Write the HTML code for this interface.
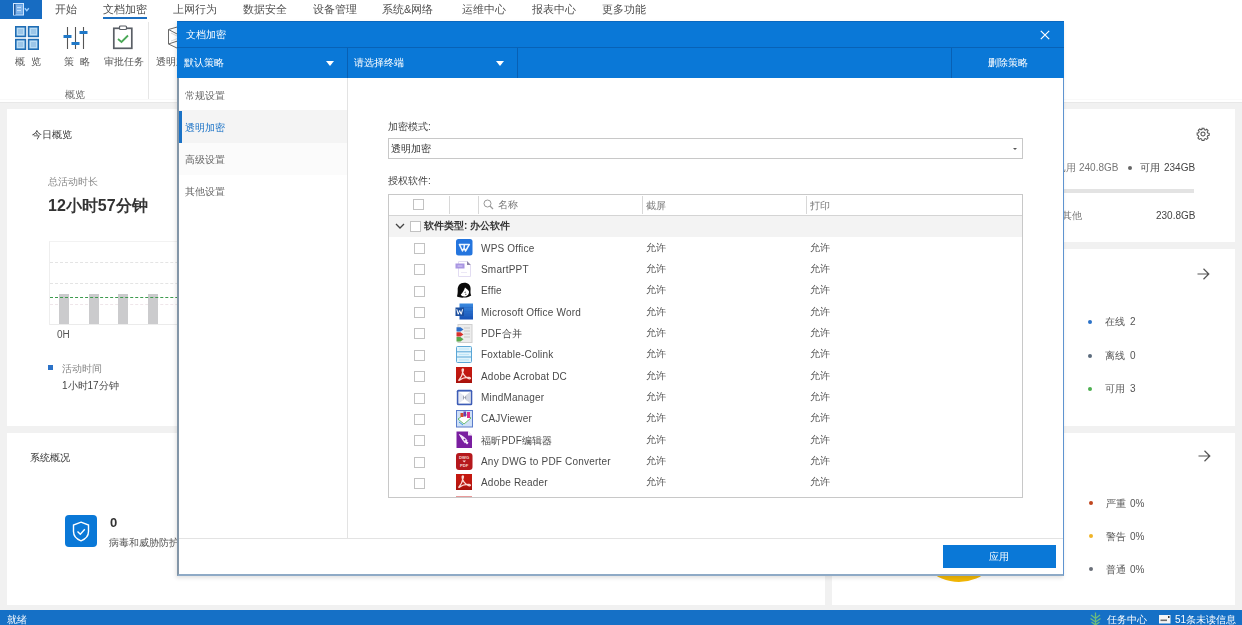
<!DOCTYPE html>
<html><head><meta charset="utf-8">
<style>
*{margin:0;padding:0;box-sizing:border-box}
html,body{width:1242px;height:625px;overflow:hidden;background:#fff;font-family:"Liberation Sans",sans-serif;color:#333}
.a{position:absolute}
.t{position:absolute;white-space:nowrap;line-height:1;will-change:transform}

.cb{position:absolute;width:11px;height:11px;border:1px solid #c2c2c2;background:#fff}
.rt{font-size:10px;letter-spacing:0.2px;color:#4a4a4a;margin-top:1px}
.rt2{font-size:10px;color:#555}
.ico{position:absolute;width:16px;height:16px}
.i0{background:#2f7de1;border-radius:3px}
.i1{background:#ece6f8}
.i2{background:#222;border-radius:50%}
.i3{background:#2b5cb8}
.i4{background:#d84a3a}
.i5{background:#e8f4fb;border:1px solid #5aa8d8}
.i6{background:#c4201a}
.i7{background:#3a5aa8}
.i8{background:#7aa6e0}
.i9{background:#7a1a9a}
.i10{background:#b41e1e;border-radius:3px}
.i11{background:#c4201a}
</style></head><body>
<!-- menu bar -->
<div class="a" style="left:0;top:0;width:42px;height:19px;background:#176cc2"></div>
<div class="t" style="left:55px;top:4px;font-size:11px;color:#505050">开始</div>
<div class="t" style="left:103px;top:4px;font-size:11px;color:#505050">文档加密</div>
<div class="a" style="left:103px;top:17px;width:44px;height:2px;background:#1c6fc1"></div>
<div class="t" style="left:173px;top:4px;font-size:11px;color:#505050">上网行为</div>
<div class="t" style="left:243px;top:4px;font-size:11px;color:#505050">数据安全</div>
<div class="t" style="left:313px;top:4px;font-size:11px;color:#505050">设备管理</div>
<div class="t" style="left:382px;top:4px;font-size:11px;color:#505050">系统&amp;网络</div>
<div class="t" style="left:462px;top:4px;font-size:11px;color:#505050">运维中心</div>
<div class="t" style="left:532px;top:4px;font-size:11px;color:#505050">报表中心</div>
<div class="t" style="left:602px;top:4px;font-size:11px;color:#505050">更多功能</div>

<!-- ribbon -->
<div class="t" style="left:15px;top:57px;font-size:10px;color:#555">概&nbsp;&nbsp;览</div>
<div class="t" style="left:64px;top:57px;font-size:10px;color:#555">策&nbsp;&nbsp;略</div>
<div class="t" style="left:104px;top:57px;font-size:10px;color:#555">审批任务</div>
<div class="t" style="left:156px;top:57px;font-size:10px;color:#555">透明加密</div>
<div class="t" style="left:65px;top:90px;font-size:10px;color:#666">概览</div>
<div class="a" style="left:148px;top:22px;width:1px;height:78px;background:#e6e6e6"></div>

<!-- gray bg -->
<div class="a" style="left:0;top:102px;width:1242px;height:508px;background:#f1f1f1"></div>
<div class="a" style="left:7px;top:109px;width:818px;height:317px;background:#fff"></div>
<div class="a" style="left:832px;top:109px;width:403px;height:133px;background:#fff"></div>
<div class="a" style="left:832px;top:249px;width:403px;height:177px;background:#fff"></div>
<div class="a" style="left:7px;top:433px;width:818px;height:172px;background:#fff"></div>
<div class="a" style="left:832px;top:433px;width:403px;height:172px;background:#fff"></div>

<!-- card content -->
<div class="t" style="left:32px;top:130px;font-size:10px;color:#333">今日概览</div>
<div class="t" style="left:48px;top:177px;font-size:10px;color:#888">总活动时长</div>
<div class="t" style="left:48px;top:198px;font-size:16px;font-weight:bold;color:#333">12小时57分钟</div>

<div class="t" style="left:30px;top:453px;font-size:10px;color:#333">系统概况</div>

<!-- status bar -->
<div class="a" style="left:0;top:610px;width:1242px;height:15px;background:#1570c6"></div>
<div class="t" style="left:7px;top:615px;font-size:10px;color:#fff">就绪</div>
<div class="t" style="left:1107px;top:615px;font-size:10px;color:#fff">任务中心</div>
<div class="t" style="left:1175px;top:615px;font-size:10px;color:#fff">51条未读信息</div>


<!-- app button icon -->
<svg class="a" style="left:13px;top:3px" width="17" height="13" viewBox="0 0 17 13"><rect x="0.5" y="0.5" width="10" height="11.5" fill="#5b9be0" stroke="#cfe6ff" stroke-width="1"/><rect x="3" y="2" width="6.5" height="8.5" fill="#7fb3ea"/><path d="M1.8 1V12" stroke="#123f78" stroke-width="1"/><path d="M4 4.5H8M4 7.5H8" stroke="#cfe6ff" stroke-width="0.8"/><path d="M11.8 5.3L13.8 7.6L15.8 5.3" fill="none" stroke="#9fd0ff" stroke-width="1.4"/></svg>
<!-- ribbon icons -->
<svg class="a" style="left:15px;top:26px" width="24" height="24" viewBox="0 0 24 24">
<g fill="#b9dcf5" stroke="#1f6db4" stroke-width="1.6">
<rect x="0.8" y="0.8" width="9.6" height="9.6"/><rect x="13.6" y="0.8" width="9.6" height="9.6"/>
<rect x="0.8" y="13.6" width="9.6" height="9.6"/><rect x="13.6" y="13.6" width="9.6" height="9.6"/></g>
<g fill="#9cc6e8"><rect x="3" y="3" width="5" height="5"/><rect x="16" y="3" width="5" height="5"/><rect x="3" y="16" width="5" height="5"/><rect x="16" y="16" width="5" height="5"/></g>
</svg>
<svg class="a" style="left:63px;top:26px" width="26" height="24" viewBox="0 0 26 24">
<g stroke="#555" stroke-width="1.1"><path d="M4.5 1V23M12.5 1V23M20.5 1V23"/></g>
<g fill="#1f78c8"><rect x="0.5" y="9" width="8" height="3"/><rect x="8.5" y="16" width="8" height="3"/><rect x="16.5" y="5" width="8" height="3"/></g>
</svg>
<svg class="a" style="left:112px;top:25px" width="22" height="25" viewBox="0 0 22 25">
<rect x="1.8" y="3.3" width="18" height="20" fill="none" stroke="#5a5f66" stroke-width="1.7"/>
<rect x="7.5" y="1" width="7" height="3.5" rx="1" fill="#fff" stroke="#5a5f66" stroke-width="1.2"/>
<path d="M6 14L9.5 17L16 10.5" fill="none" stroke="#4aa857" stroke-width="1.8"/>
</svg>
<svg class="a" style="left:167px;top:25px" width="12" height="26" viewBox="0 0 12 26">
<path d="M12 1.5L1.5 4.5V19L12 24M1.5 4.5L12 10M1.5 19L12 15.5" fill="none" stroke="#6a6a6a" stroke-width="1"/>
<path d="M4 8L12 12M4 16L12 13" fill="none" stroke="#cfcfcf" stroke-width="0.8"/>
</svg>
<div class="a" style="left:0;top:102px;width:1242px;height:1px;background:#e8e8e8"></div><div class="a" style="left:0;top:99px;width:1242px;height:1px;background:#f9f9f9"></div>

<!-- chart -->
<div class="a" style="left:49px;top:241px;width:776px;height:84px;border-left:1px solid #eee;border-top:1px solid #f2f2f2"></div>
<div class="a" style="left:50px;top:262px;width:775px;height:0;border-top:1px dashed #e4e4e4"></div>
<div class="a" style="left:50px;top:283px;width:775px;height:0;border-top:1px dashed #e4e4e4"></div>
<div class="a" style="left:50px;top:324px;width:775px;height:1px;background:#ebebeb"></div>
<div class="a" style="left:50px;top:304px;width:775px;height:0;border-top:1px dashed #efe6ea"></div>
<div class="a" style="left:59px;top:294px;width:10px;height:30px;background:#cbcbcd"></div>
<div class="a" style="left:89px;top:294px;width:10px;height:30px;background:#cbcbcd"></div>
<div class="a" style="left:118px;top:294px;width:10px;height:30px;background:#cbcbcd"></div>
<div class="a" style="left:148px;top:294px;width:10px;height:30px;background:#cbcbcd"></div>
<div class="a" style="left:50px;top:297px;width:775px;height:0;border-top:1px dashed #3d9a4e"></div>
<div class="t" style="left:57px;top:330px;font-size:10px;color:#555">0H</div>
<div class="a" style="left:48px;top:365px;width:5px;height:5px;background:#2b72c8"></div>
<div class="t" style="left:62px;top:364px;font-size:10px;color:#888">活动时间</div>
<div class="t" style="left:62px;top:381px;font-size:10px;color:#444">1小时17分钟</div>

<!-- shield -->
<div class="a" style="left:65px;top:515px;width:32px;height:32px;background:#0a78d7;border-radius:4px"></div>
<svg class="a" style="left:72px;top:521px" width="18" height="21" viewBox="0 0 18 21">
<path d="M9 1.2L16.5 4V10.5C16.5 15 13 18.3 9 19.8C5 18.3 1.5 15 1.5 10.5V4Z" fill="none" stroke="#fff" stroke-width="1.4"/>
<path d="M5.5 10.5L8.3 13.2L12.8 8.2" fill="none" stroke="#fff" stroke-width="1.4"/>
</svg>
<div class="t" style="left:110px;top:516px;font-size:13px;font-weight:bold;color:#333">0</div>
<div class="t" style="left:109px;top:538px;font-size:10px;color:#555">病毒和威胁防护</div>

<!-- right cards -->
<svg class="a" style="left:1196px;top:127px" width="14" height="14" viewBox="0 0 24 24"><path fill="none" stroke="#555" stroke-width="1.8" d="M12 8.5a3.5 3.5 0 1 0 0 7 3.5 3.5 0 1 0 0-7zM10.3 2h3.4l.5 2.6 1.9.8 2.2-1.5 2.4 2.4-1.5 2.2.8 1.9 2.6.5v3.4l-2.6.5-.8 1.9 1.5 2.2-2.4 2.4-2.2-1.5-1.9.8-.5 2.6h-3.4l-.5-2.6-1.9-.8-2.2 1.5-2.4-2.4 1.5-2.2-.8-1.9L2 13.7v-3.4l2.6-.5.8-1.9-1.5-2.2 2.4-2.4 2.2 1.5 1.9-.8z"/></svg>
<div class="t" style="left:1056px;top:163px;font-size:10px;color:#777">已用</div><div class="t" style="left:1079px;top:163px;font-size:10px;color:#777">240.8GB</div>
<div class="a" style="left:1128px;top:166px;width:4px;height:4px;border-radius:50%;background:#666"></div>
<div class="t" style="left:1140px;top:163px;font-size:10px;color:#444">可用</div><div class="t" style="left:1164px;top:163px;font-size:10px;color:#444">234GB</div>
<div class="a" style="left:1000px;top:189px;width:194px;height:4px;background:#e3e3e3"></div>
<div class="t" style="left:1062px;top:211px;font-size:10px;color:#777">其他</div>
<div class="t" style="left:1156px;top:211px;font-size:10px;color:#444">230.8GB</div>

<svg class="a" style="left:1197px;top:268px" width="13" height="12" viewBox="0 0 13 12"><path d="M0.5 6H12M6.5 0.8L11.8 6L6.5 11.2" fill="none" stroke="#555" stroke-width="1.2"/></svg>
<div class="a" style="left:1088px;top:320px;width:4px;height:4px;border-radius:50%;background:#2b72c8"></div>
<div class="a" style="left:1088px;top:354px;width:4px;height:4px;border-radius:50%;background:#5b6b7c"></div>
<div class="a" style="left:1088px;top:387px;width:4px;height:4px;border-radius:50%;background:#4caf50"></div>
<div class="t" style="left:1105px;top:317px;font-size:10px;color:#555">在线</div><div class="t" style="left:1130px;top:317px;font-size:10px;color:#555">2</div>
<div class="t" style="left:1105px;top:351px;font-size:10px;color:#555">离线</div><div class="t" style="left:1130px;top:351px;font-size:10px;color:#555">0</div>
<div class="t" style="left:1105px;top:384px;font-size:10px;color:#555">可用</div><div class="t" style="left:1130px;top:384px;font-size:10px;color:#555">3</div>

<svg class="a" style="left:1198px;top:450px" width="13" height="12" viewBox="0 0 13 12"><path d="M0.5 6H12M6.5 0.8L11.8 6L6.5 11.2" fill="none" stroke="#555" stroke-width="1.2"/></svg>
<div class="a" style="left:1089px;top:501px;width:4px;height:4px;border-radius:50%;background:#c0461e"></div>
<div class="a" style="left:1089px;top:534px;width:4px;height:4px;border-radius:50%;background:#f0b428"></div>
<div class="a" style="left:1089px;top:567px;width:4px;height:4px;border-radius:50%;background:#6b7079"></div>
<div class="t" style="left:1106px;top:499px;font-size:10px;color:#555">严重</div><div class="t" style="left:1130px;top:499px;font-size:10px;color:#555">0%</div>
<div class="t" style="left:1106px;top:532px;font-size:10px;color:#555">警告</div><div class="t" style="left:1130px;top:532px;font-size:10px;color:#555">0%</div>
<div class="t" style="left:1106px;top:565px;font-size:10px;color:#555">普通</div><div class="t" style="left:1130px;top:565px;font-size:10px;color:#555">0%</div>

<div class="a" style="left:914px;top:492px;width:90px;height:90px;border-radius:50%;background:#f2b705"></div>

<!-- status icons -->
<svg class="a" style="left:1089px;top:612px" width="13" height="13" viewBox="0 0 13 13"><path d="M6.5 0.5V13M2 3L6.5 6.5L11 3M1.5 6.5L6.5 10L11.5 6.5M2.5 10L6.5 13L10.5 10" fill="none" stroke="#6dbb7c" stroke-width="1.3"/></svg>
<svg class="a" style="left:1159px;top:615px" width="12" height="9" viewBox="0 0 12 9"><rect x="0" y="0" width="11.5" height="8.5" fill="#f4f4f4"/><rect x="1.5" y="4.5" width="6.5" height="1.6" fill="#6b6b6b"/><rect x="9" y="1" width="1.5" height="2" fill="#333"/></svg>

<!-- dialog -->
<div class="a" style="left:177px;top:21px;width:887px;height:555px;background:#fff;box-shadow:-1px 2px 4px rgba(0,0,0,0.12);border-left:2px solid #8396a8;border-right:1px solid #5f94d0;border-bottom:2px solid #8eaac6"></div>
<div class="a" style="left:177px;top:21px;width:887px;height:26px;background:#0a78d7;border-top:1px solid #0a68c0"></div>
<div class="a" style="left:177px;top:47px;width:887px;height:1px;background:#0862b6"></div>
<div class="a" style="left:177px;top:48px;width:887px;height:30px;background:#0a78d7"></div>
<div class="t" style="left:186px;top:30px;font-size:10px;color:#fff">文档加密</div>
<div class="t" style="left:184px;top:58px;font-size:10px;color:#fff">默认策略</div>
<div class="t" style="left:354px;top:58px;font-size:10px;color:#fff">请选择终端</div>
<div class="t" style="left:988px;top:58px;font-size:10px;color:#fff">删除策略</div>


<!-- toolbar separators -->
<div class="a" style="left:347px;top:48px;width:1px;height:30px;background:#0860b4"></div>
<div class="a" style="left:517px;top:48px;width:1px;height:30px;background:#0860b4"></div>
<div class="a" style="left:951px;top:48px;width:1px;height:30px;background:#0860b4"></div>
<div class="a" style="left:326px;top:61px;width:0;height:0;border-left:4px solid transparent;border-right:4px solid transparent;border-top:5px solid #fff"></div>
<div class="a" style="left:496px;top:61px;width:0;height:0;border-left:4px solid transparent;border-right:4px solid transparent;border-top:5px solid #fff"></div>
<!-- close X -->
<svg class="a" style="left:1040px;top:30px" width="10" height="10" viewBox="0 0 10 10"><path d="M0.8 0.8L9.2 9.2M9.2 0.8L0.8 9.2" stroke="#fff" stroke-width="1.2"/></svg>

<!-- left nav -->
<div class="a" style="left:347px;top:78px;width:1px;height:460px;background:#e3e3e3"></div>
<div class="a" style="left:179px;top:143px;width:168px;height:32px;background:#fbfbfb"></div><div class="a" style="left:179px;top:110px;width:168px;height:33px;background:#f4f4f4"></div>
<div class="a" style="left:179px;top:111px;width:3px;height:32px;background:#1a72c6"></div>
<div class="t" style="left:185px;top:91px;font-size:10px;color:#666">常规设置</div>
<div class="t" style="left:185px;top:123px;font-size:10px;color:#1a72c6">透明加密</div>
<div class="t" style="left:185px;top:155px;font-size:10px;color:#666">高级设置</div>
<div class="t" style="left:185px;top:187px;font-size:10px;color:#666">其他设置</div>

<!-- footer -->
<div class="a" style="left:179px;top:538px;width:884px;height:1px;background:#e3e3e3"></div>
<div class="a" style="left:943px;top:545px;width:113px;height:23px;background:#0a78d7"></div>
<div class="t" style="left:989px;top:552px;font-size:10px;color:#fff">应用</div>

<!-- content -->
<div class="t" style="left:388px;top:122px;font-size:10px;color:#444">加密模式:</div>
<div class="a" style="left:388px;top:138px;width:635px;height:21px;border:1px solid #c8c8c8;background:#fff"></div>
<div class="t" style="left:391px;top:144px;font-size:10px;color:#333">透明加密</div>
<div class="a" style="left:1013px;top:148px;width:0;height:0;border-left:2px solid transparent;border-right:2px solid transparent;border-top:2px solid #555"></div>
<div class="t" style="left:388px;top:176px;font-size:10px;color:#444">授权软件:</div>

<div class="a" style="left:388px;top:194px;width:635px;height:304px;border:1px solid #c8c8c8;background:#fff;overflow:hidden"></div>
<div class="a" style="left:389px;top:215px;width:633px;height:1px;background:#d4d4d4"></div>
<div class="a" style="left:389px;top:216px;width:633px;height:21px;background:#f3f3f3"></div>
<div class="a" style="left:449px;top:196px;width:1px;height:18px;background:#d8d8d8"></div>
<div class="a" style="left:478px;top:196px;width:1px;height:18px;background:#d8d8d8"></div>
<div class="a" style="left:642px;top:196px;width:1px;height:18px;background:#d8d8d8"></div>
<div class="a" style="left:806px;top:196px;width:1px;height:18px;background:#d8d8d8"></div>
<div class="cb" style="left:413px;top:199px"></div>
<svg class="a" style="left:483px;top:199px" width="11" height="11" viewBox="0 0 11 11"><circle cx="4.5" cy="4.5" r="3.5" fill="none" stroke="#999" stroke-width="1"/><path d="M7 7L10 10" stroke="#999" stroke-width="1.2"/></svg>
<div class="t" style="left:498px;top:200px;font-size:10px;color:#777">名称</div>
<div class="t" style="left:646px;top:201px;font-size:10px;color:#777">截屏</div>
<div class="t" style="left:810px;top:201px;font-size:10px;color:#777">打印</div>
<svg class="a" style="left:395px;top:222px" width="10" height="8" viewBox="0 0 10 8"><path d="M1 2L5 6L9 2" fill="none" stroke="#444" stroke-width="1.3"/></svg>
<div class="cb" style="left:410px;top:221px"></div>
<div class="t" style="left:424px;top:221px;font-size:10px;font-weight:bold;color:#333">软件类型: 办公软件</div>
<svg width="0" height="0" style="position:absolute"><defs><linearGradient id="gA" x1="0" y1="0" x2="0" y2="1"><stop offset="0" stop-color="#d9251b" stop-opacity="0"/><stop offset="1" stop-color="#8c0c08" stop-opacity="0.55"/></linearGradient></defs></svg>
<div class="cb" style="left:414px;top:243px"></div>
<svg class="a" style="left:456px;top:239px;overflow:visible" width="17" height="17" viewBox="0 0 17 17"><rect x="0" y="0" width="16.5" height="16.5" rx="2.5" fill="#2475de"/><path d="M3.4 5.4H13.4L9.5 12L8.1 9L6.5 12Z M8.4 5.4L8.1 9" fill="none" stroke="#eef6ff" stroke-width="1.5" stroke-linejoin="round"/></svg>
<div class="t rt" style="left:481px;top:243px">WPS Office</div>
<div class="t rt2" style="left:646px;top:243px">允许</div>
<div class="t rt2" style="left:810px;top:243px">允许</div>
<div class="cb" style="left:414px;top:264px"></div>
<svg class="a" style="left:456px;top:260px;overflow:visible" width="17" height="17" viewBox="0 0 17 17"><path d="M2.5 1.5H11L14.5 5V16.5H2.5Z" fill="#fff" stroke="#e2dcf2" stroke-width="1"/><path d="M11 1L14.8 5H11Z" fill="#8f86a8"/><rect x="-0.5" y="3.5" width="9" height="5" fill="#a996e2"/><rect x="1.5" y="5.3" width="5" height="1.5" fill="#c9bcf0"/><path d="M5 12.5H11" stroke="#ece8f6" stroke-width="1"/></svg>
<div class="t rt" style="left:481px;top:264px">SmartPPT</div>
<div class="t rt2" style="left:646px;top:264px">允许</div>
<div class="t rt2" style="left:810px;top:264px">允许</div>
<div class="cb" style="left:414px;top:286px"></div>
<svg class="a" style="left:456px;top:282px;overflow:visible" width="17" height="17" viewBox="0 0 17 17"><path d="M8.2 0.8C3.8 0.8 1.5 4 1.7 8C1.8 10.5 1.5 12.5 1 14.5C3 15.2 5 16 8 15.6C11 15.5 13.5 14.8 15.2 13.5C14.2 11.5 14.5 9 14.6 7C14.8 3.5 12.5 0.8 8.2 0.8Z" fill="#0a0a0a"/><path d="M9 5.5C10.5 7 12.5 8 13 9.5C13.2 12 11.5 14.5 8.5 14.6C6.5 14.6 5.2 13.8 4.8 12.6C6.5 11 8 8.5 9 5.5Z" fill="#fff"/><path d="M8.5 10.5L10 10M10.5 12.3H9" stroke="#222" stroke-width="0.7"/></svg>
<div class="t rt" style="left:481px;top:285px">Effie</div>
<div class="t rt2" style="left:646px;top:285px">允许</div>
<div class="t rt2" style="left:810px;top:285px">允许</div>
<div class="cb" style="left:414px;top:307px"></div>
<svg class="a" style="left:456px;top:303px;overflow:visible" width="17" height="17" viewBox="0 0 17 17"><defs><linearGradient id="gW" x1="0" y1="0" x2="0" y2="1"><stop offset="0" stop-color="#3a8ae0"/><stop offset="1" stop-color="#1650b4"/></linearGradient></defs><rect x="3.5" y="0.5" width="13.5" height="16" fill="url(#gW)"/><path d="M6 4.5H17M6 8.5H17M6 12.5H17" stroke="#2566c2" stroke-width="0.8" opacity="0.6"/><rect x="-0.5" y="4.5" width="8.5" height="8.5" fill="#1b4e9e"/><path d="M0.8 6.3L2.2 11.3L3.7 7.5L5.2 11.3L6.6 6.3" fill="none" stroke="#fff" stroke-width="1"/></svg>
<div class="t rt" style="left:481px;top:307px">Microsoft Office Word</div>
<div class="t rt2" style="left:646px;top:307px">允许</div>
<div class="t rt2" style="left:810px;top:307px">允许</div>
<div class="cb" style="left:414px;top:328px"></div>
<svg class="a" style="left:456px;top:324px;overflow:visible" width="17" height="17" viewBox="0 0 17 17"><rect x="2" y="0.5" width="14" height="18" fill="#ececec" stroke="#cfcfcf" stroke-width="1"/><path d="M8 4H14M8 7H14M8 10H14M8 13H14" stroke="#c8c8c8" stroke-width="1"/><path d="M0.5 3.2H4.5L7.5 5.4L4.5 7.6H0.5Z" fill="#2e6fc8"/><path d="M0.5 8.2H4.5L7.5 10.4L4.5 12.6H0.5Z" fill="#d8322c"/><path d="M0.5 13H4.5L7.5 15.2L4.5 17.4H0.5Z" fill="#5aa84c"/></svg>
<div class="t rt" style="left:481px;top:328px">PDF合并</div>
<div class="t rt2" style="left:646px;top:328px">允许</div>
<div class="t rt2" style="left:810px;top:328px">允许</div>
<div class="cb" style="left:414px;top:350px"></div>
<svg class="a" style="left:456px;top:346px;overflow:visible" width="17" height="17" viewBox="0 0 17 17"><rect x="0.5" y="0.5" width="15" height="16" rx="1" fill="#e1f4fc" stroke="#5aa6d6" stroke-width="1"/><path d="M0.5 5.8H15.5M0.5 11H15.5" stroke="#5aa6d6" stroke-width="1"/><path d="M3 3H13M3 8.5H13M3 13.8H13" stroke="#bfe6f8" stroke-width="1.2"/></svg>
<div class="t rt" style="left:481px;top:349px">Foxtable-Colink</div>
<div class="t rt2" style="left:646px;top:349px">允许</div>
<div class="t rt2" style="left:810px;top:349px">允许</div>
<div class="cb" style="left:414px;top:371px"></div>
<svg class="a" style="left:456px;top:367px;overflow:visible" width="17" height="17" viewBox="0 0 17 17"><rect x="0" y="0" width="16" height="16" fill="#c3170f"/><rect x="0" y="0" width="16" height="16" fill="url(#gA)"/><path d="M2.5 13.8C4.5 11.5 6.8 6.5 7.4 3.2C7.7 1.5 6.2 1.3 6.1 3C6 6 9 10.5 13.2 11.8C14.8 12.2 14.8 10.6 13.2 10.4C10 10 5 11.8 2.5 13.8Z" fill="none" stroke="#fbd9d4" stroke-width="1.3"/></svg>
<div class="t rt" style="left:481px;top:371px">Adobe Acrobat DC</div>
<div class="t rt2" style="left:646px;top:371px">允许</div>
<div class="t rt2" style="left:810px;top:371px">允许</div>
<div class="cb" style="left:414px;top:393px"></div>
<svg class="a" style="left:456px;top:389px;overflow:visible" width="17" height="17" viewBox="0 0 17 17"><rect x="0.8" y="0.8" width="15.5" height="15.5" rx="1.5" fill="#3c5cb6"/><rect x="2.6" y="2.6" width="12" height="12" fill="#fff"/><path d="M2.6 2.6L7 6V11.2L2.6 14.6Z" fill="#e6e9f2"/><path d="M14.6 2.6L10.2 6V11.2L14.6 14.6Z" fill="#d4d8e4"/><path d="M7 6L8.6 8.6L10.2 6V11.2L8.6 8.6L7 11.2Z" fill="#9aa0b0"/></svg>
<div class="t rt" style="left:481px;top:392px">MindManager</div>
<div class="t rt2" style="left:646px;top:392px">允许</div>
<div class="t rt2" style="left:810px;top:392px">允许</div>
<div class="cb" style="left:414px;top:414px"></div>
<svg class="a" style="left:456px;top:410px;overflow:visible" width="17" height="17" viewBox="0 0 17 17"><rect x="0.5" y="0.5" width="16" height="16.5" fill="#cfe0f6" stroke="#5a7ccc" stroke-width="1"/><path d="M2 9L8 14L15 8L9 4Z" fill="#fff" stroke="#4caf50" stroke-width="0.8"/><rect x="4.5" y="3" width="3" height="4" fill="#d84a2a"/><rect x="7.5" y="1.5" width="2.5" height="5" fill="#6a3ab0"/><rect x="11" y="2" width="3" height="6" fill="#e0308a"/><path d="M3 12L7 15" stroke="#3a9ad8" stroke-width="1"/></svg>
<div class="t rt" style="left:481px;top:413px">CAJViewer</div>
<div class="t rt2" style="left:646px;top:413px">允许</div>
<div class="t rt2" style="left:810px;top:413px">允许</div>
<div class="cb" style="left:414px;top:435px"></div>
<svg class="a" style="left:456px;top:431px;overflow:visible" width="17" height="17" viewBox="0 0 17 17"><path d="M0.5 0.5H12L16 4.5V17H0.5Z" fill="#7a1ea0"/><path d="M12 0L16.5 4.5H12Z" fill="#f2e4f8"/><path d="M3 3L12.5 11.8L11 13.5L2.8 3.3Z" fill="#fff"/><path d="M3 3C6 4 9 6.5 11.5 9.5L9 12.5C7 10 4.5 6.5 3 3Z" fill="#f4e6fa"/><circle cx="8.5" cy="8.6" r="0.9" fill="#7a1ea0"/></svg>
<div class="t rt" style="left:481px;top:435px">福昕PDF编辑器</div>
<div class="t rt2" style="left:646px;top:435px">允许</div>
<div class="t rt2" style="left:810px;top:435px">允许</div>
<div class="cb" style="left:414px;top:457px"></div>
<svg class="a" style="left:456px;top:453px;overflow:visible" width="17" height="17" viewBox="0 0 17 17"><rect x="0" y="0" width="16.5" height="17" rx="3" fill="#b5181c"/><text x="8.2" y="5.5" font-size="4.2" font-family="Liberation Sans" font-weight="bold" fill="#f6d4d4" text-anchor="middle">DWG</text><path d="M6.5 7.5H10L8.2 9.5Z" fill="#f6d4d4"/><text x="8.2" y="14" font-size="4.2" font-family="Liberation Sans" font-weight="bold" fill="#f6d4d4" text-anchor="middle">PDF</text></svg>
<div class="t rt" style="left:481px;top:456px">Any DWG to PDF Converter</div>
<div class="t rt2" style="left:646px;top:456px">允许</div>
<div class="t rt2" style="left:810px;top:456px">允许</div>
<div class="cb" style="left:414px;top:478px"></div>
<svg class="a" style="left:456px;top:474px;overflow:visible" width="17" height="17" viewBox="0 0 17 17"><rect x="0" y="0" width="16" height="16" fill="#c3170f"/><rect x="0" y="0" width="16" height="16" fill="url(#gA)"/><path d="M2.5 13.8C4.5 11.5 6.8 6.5 7.4 3.2C7.7 1.5 6.2 1.3 6.1 3C6 6 9 10.5 13.2 11.8C14.8 12.2 14.8 10.6 13.2 10.4C10 10 5 11.8 2.5 13.8Z" fill="none" stroke="#fbd9d4" stroke-width="1.3"/></svg>
<div class="t rt" style="left:481px;top:477px">Adobe Reader</div>
<div class="t rt2" style="left:646px;top:477px">允许</div>
<div class="t rt2" style="left:810px;top:477px">允许</div>
<div class="a" style="left:456px;top:496px;width:16px;height:1px;background:#e89a9a"></div>
</body></html>
